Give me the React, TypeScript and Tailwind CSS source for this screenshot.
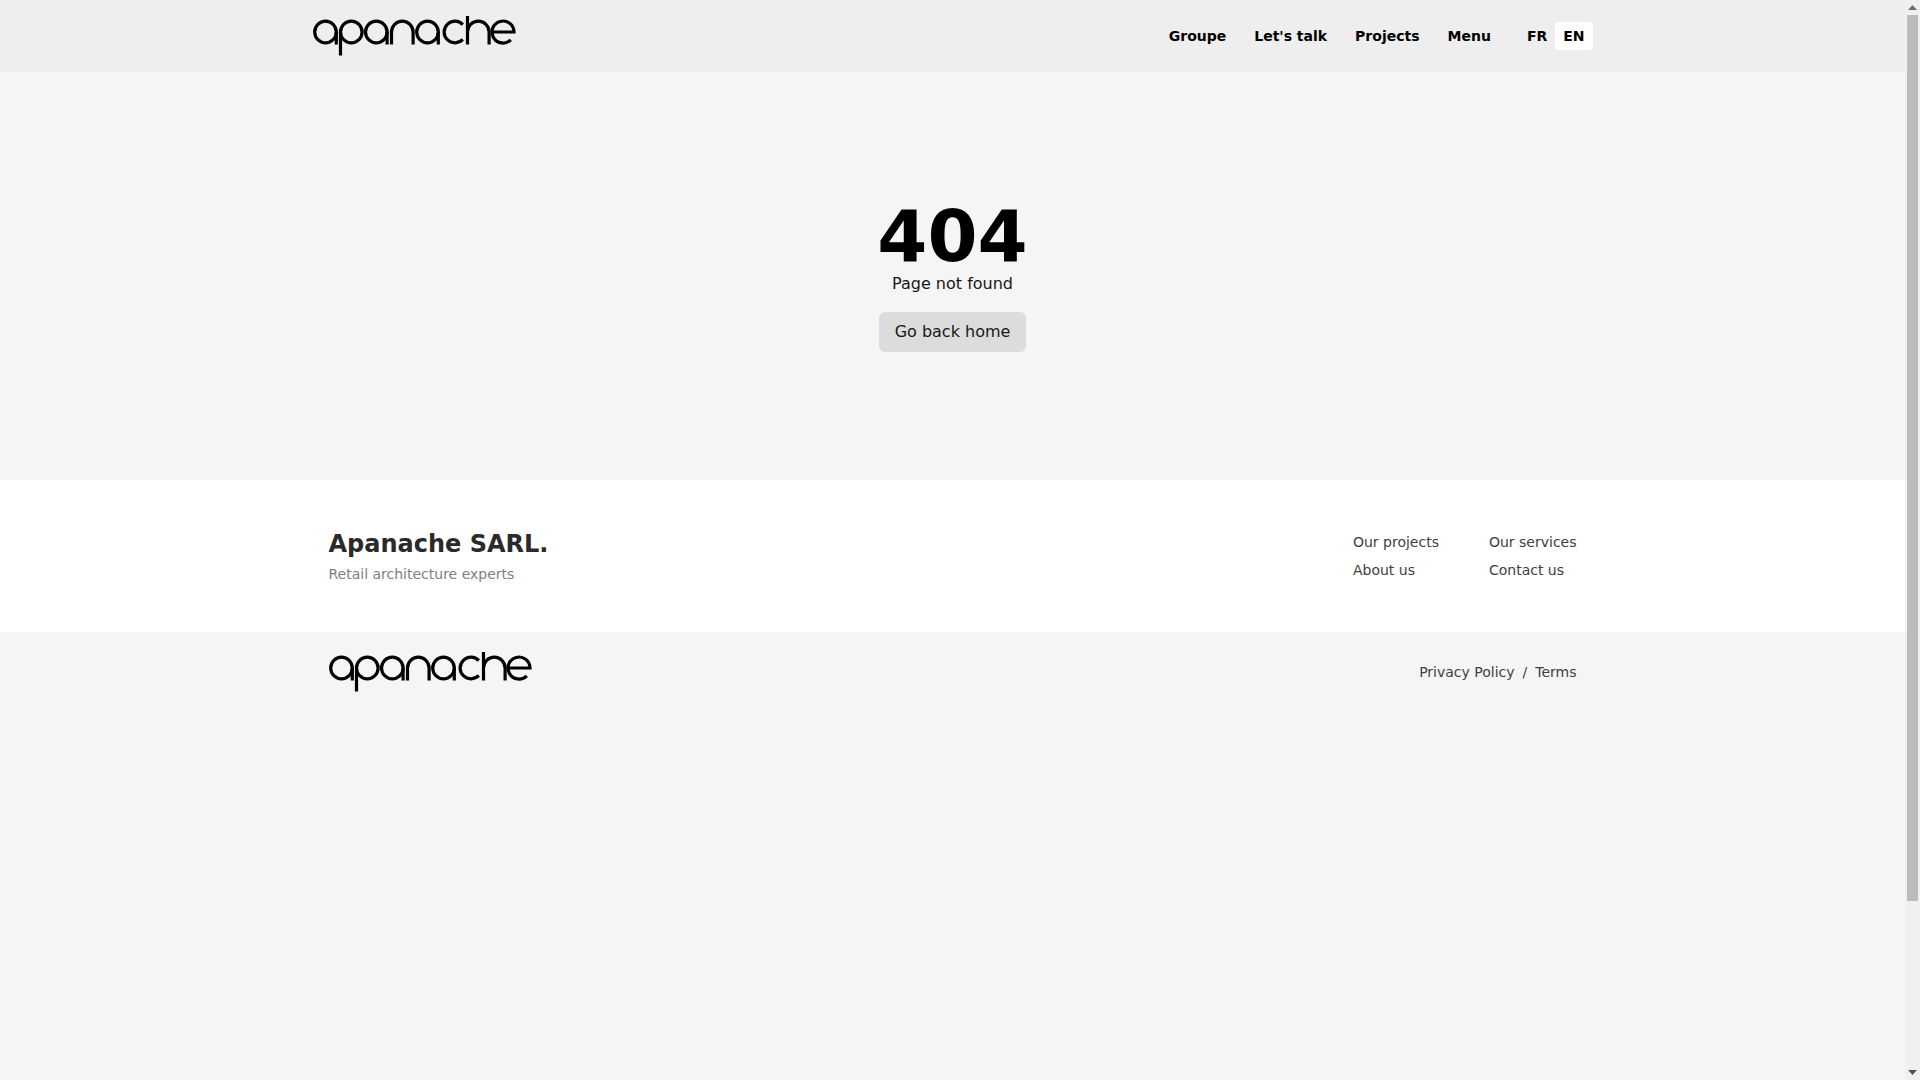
function Logo() {
  return (
    <svg className="block shrink-0" width="204" height="40" viewBox="1 0 204 40" fill="none" stroke="#000" strokeWidth="3.2">
      <circle cx="13.5" cy="16" r="10.8" />
      <path d="M24.3 16V28.5" />
      <path d="M28.5 16V39.5" />
      <circle cx="39.3" cy="16" r="10.8" />
      <circle cx="64.3" cy="16" r="10.8" />
      <path d="M75.1 16V28.5" />
      <path d="M79.5 28.5V16a10.8 10.8 0 0 1 21.6 0V28.5" />
      <circle cx="115.5" cy="16" r="10.8" />
      <path d="M126.3 16V28.5" />
      <path d="M150.8 8.6a10.8 10.8 0 1 0 0 14.8" />
      <path d="M155.5 0V28.5M155.5 16a10.8 10.8 0 0 1 21.6 0V28.5" />
      <path d="M180 16H202a11 11 0 1 0-3.2 7.8" />
    </svg>
  );
}

function Scrollbar() {
  return (
    <aside className="flex h-full w-[15px] shrink-0 flex-col items-center bg-[#f0f0f0] pt-[15px]">
      <svg className="absolute top-[5px]" width="9" height="5" viewBox="0 0 9 5" fill="#707070">
        <path d="M4.5 0 9 5H0Z" />
      </svg>
      <div className="h-[886px] w-[11px] bg-[#bcbcbc]" />
      <svg className="absolute bottom-[5px]" width="9" height="5" viewBox="0 0 9 5" fill="#505050">
        <path d="M0 0H9L4.5 5Z" />
      </svg>
    </aside>
  );
}

export default function App() {
  return (
    <div className="flex h-screen overflow-hidden bg-[#f5f5f5] text-black antialiased font-['DejaVu_Sans',sans-serif]">
      <div className="min-w-0 flex-1">
        <header className="h-[72px] bg-[#eeeeee]">
          <div className="mx-auto flex h-full max-w-[1280px] items-center justify-between">
            <Logo />
            <nav className="flex items-center text-sm font-bold">
              <div className="flex items-center gap-7">
                <a>Groupe</a>
                <a>Let's talk</a>
                <a>Projects</a>
                <a>Menu</a>
              </div>
              <div className="ml-[28px] flex items-center">
                <a className="px-2 py-1.5">FR</a>
                <a className="rounded bg-white px-2 py-1">EN</a>
              </div>
            </nav>
          </div>
        </header>
        <main className="flex h-[408px] flex-col items-center pt-[128px]">
          <h1 className="text-7xl leading-none font-bold">404</h1>
          <p className="text-base text-[#171717]">Page not found</p>
          <a className="mt-4 rounded-md bg-[#dcdcdc] px-4 py-2 text-base text-[#171717]">Go back home</a>
        </main>
        <footer>
          <div className="h-[152px] bg-white">
            <div className="mx-auto flex h-full max-w-[1280px] items-start justify-between px-4 pt-12">
              <div>
                <div className="text-2xl font-bold text-[#2a2a2a]">Apanache SARL.</div>
                <div className="mt-1 text-sm text-[#808080]">Retail architecture experts</div>
              </div>
              <div className="flex gap-[50px] pt-1 text-sm text-[#404040]">
                <div className="flex flex-col gap-2">
                  <a>Our projects</a>
                  <a>About us</a>
                </div>
                <div className="flex flex-col gap-2">
                  <a>Our services</a>
                  <a>Contact us</a>
                </div>
              </div>
            </div>
          </div>
          <div className="mx-auto flex max-w-[1280px] items-center justify-between px-4 py-5">
            <Logo />
            <div className="flex gap-2 text-sm text-[#404040]">
              <a>Privacy Policy</a>
              <span>/</span>
              <a>Terms</a>
            </div>
          </div>
        </footer>
      </div>
      <Scrollbar />
    </div>
  );
}
